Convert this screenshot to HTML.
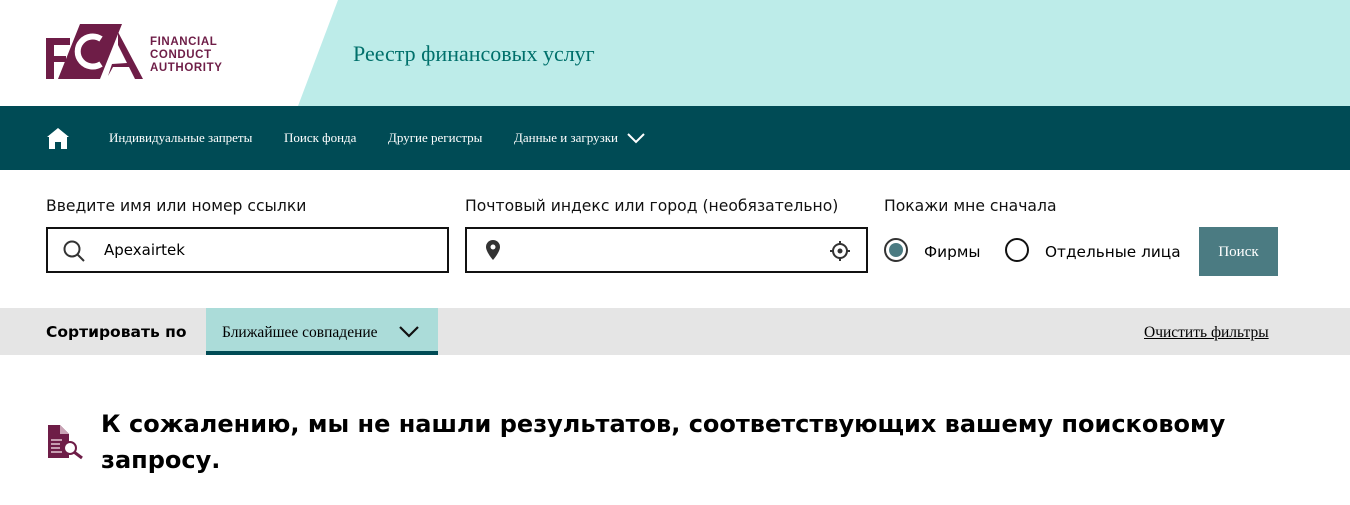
<!DOCTYPE html>
<html><head><meta charset="utf-8"><style>
*{margin:0;padding:0;box-sizing:border-box}
body{width:1350px;height:505px;background:#fff;font-family:"DejaVu Sans","Liberation Sans",sans-serif;position:relative;overflow:hidden}
.hdr{position:absolute;left:0;top:0;width:1350px;height:106px}
.nav{position:absolute;top:106px;left:0;width:1350px;height:64px;background:#004b55;color:#fff;font-family:"Liberation Serif",serif;font-size:13px}
.nav span{position:absolute;top:24px}
.lbl{position:absolute;top:197px;font-size:15.6px;color:#111}
.box{position:absolute;top:227px;height:46px;border:2px solid #111;width:403px}
.sort{position:absolute;top:308px;left:0;width:1350px;height:47px;background:#e5e5e5}
</style></head><body>
<svg class="hdr" width="1350" height="106">
<polygon points="338,0 1350,0 1350,106 298,106" fill="#bdece9"/>
<polygon points="46,38 46,79 54,79 54,62 66,62 66,56 54,56 54,45 70,45 70,38" fill="#6e1d47"/>
<polygon points="80,24 122,24 100,79 58,79" fill="#6e1d47"/>
<path d="M101,39 A15,15 0 1 0 101,64" fill="none" stroke="#fff" stroke-width="6"/>
<polygon points="118,32 143,79 135,79 129,67 113,67 108,76 112,64 127,63 118,45" fill="#6e1d47"/>
<text x="150" y="45" font-family="Liberation Sans" font-size="11.5" fill="#6e1d47" font-weight="bold" letter-spacing="0.6">FINANCIAL</text>
<text x="150" y="58" font-family="Liberation Sans" font-size="11.5" fill="#6e1d47" font-weight="bold" letter-spacing="0.6">CONDUCT</text>
<text x="150" y="71" font-family="Liberation Sans" font-size="11.5" fill="#6e1d47" font-weight="bold" letter-spacing="0.6">AUTHORITY</text>
<text x="353" y="61" font-family="Liberation Serif" font-size="22" fill="#00706b">Реестр финансовых услуг</text>
</svg>
<div class="nav">
<svg style="position:absolute;left:47px;top:21px" width="22" height="22"><path d="M11,1 L22,10 L20,10 L20,22 L14,22 L14,15 L8,15 L8,22 L2,22 L2,10 L0,10Z" fill="#fff"/></svg>
<span style="left:109px">Индивидуальные запреты</span>
<span style="left:284px">Поиск фонда</span>
<span style="left:388px">Другие регистры</span>
<span style="left:514px">Данные и загрузки</span>
<svg style="position:absolute;left:626px;top:26px" width="20" height="14"><path d="M2,2 L10,10 L18,2" fill="none" stroke="#fff" stroke-width="2"/></svg>
</div>
<div class="lbl" style="left:46px">Введите имя или номер ссылки</div>
<div class="lbl" style="left:465px">Почтовый индекс или город (необязательно)</div>
<div class="lbl" style="left:884px">Покажи мне сначала</div>
<div class="box" style="left:46px"><svg style="position:absolute;left:14px;top:10px" width="24" height="24"><circle cx="10" cy="10" r="7.5" fill="none" stroke="#333" stroke-width="2"/><path d="M15.5,15.5 L22,22" stroke="#333" stroke-width="2"/></svg><span style="position:absolute;left:56px;top:12px;font-size:15px">Apexairtek</span></div>
<div class="box" style="left:465px"><svg style="position:absolute;left:18px;top:10px" width="16" height="22"><path d="M8,1 A7,7 0 0 1 15,8 C15,13 8,21 8,21 C8,21 1,13 1,8 A7,7 0 0 1 8,1Z" fill="#333"/><circle cx="8" cy="8" r="2.5" fill="#fff"/></svg><svg style="position:absolute;left:362px;top:11px" width="22" height="22"><circle cx="11" cy="11" r="7" fill="none" stroke="#333" stroke-width="2"/><circle cx="11" cy="11" r="2.5" fill="#333"/><path d="M11,1V5M11,17V21M1,11H5M17,11H21" stroke="#333" stroke-width="2"/></svg></div>
<svg style="position:absolute;left:884px;top:238px" width="26" height="26"><circle cx="12" cy="12" r="11" fill="none" stroke="#333" stroke-width="2"/><circle cx="12" cy="12" r="7" fill="#4b7b82"/></svg>
<span style="position:absolute;left:924px;top:243px;font-size:15.3px">Фирмы</span>
<svg style="position:absolute;left:1005px;top:238px" width="26" height="26"><circle cx="12" cy="12" r="11" fill="none" stroke="#111" stroke-width="2"/></svg>
<span style="position:absolute;left:1045px;top:243px;font-size:15.3px">Отдельные лица</span>
<div style="position:absolute;left:1199px;top:227px;width:79px;height:49px;background:#4b7b82;color:#fff;font-family:'Liberation Serif',serif;font-size:15px;text-align:center;line-height:51px">Поиск</div>
<div class="sort">
<span style="position:absolute;left:46px;top:15px;font-weight:bold;font-size:15.5px">Сортировать по</span>
<div style="position:absolute;left:206px;top:0;width:232px;height:47px;background:#abdcd9;border-bottom:4px solid #004b55"><span style="position:absolute;left:16px;top:16px;font-family:'Liberation Serif',serif;font-size:15.5px">Ближайшее совпадение</span><svg style="position:absolute;left:192px;top:17px" width="22" height="14"><path d="M2,2 L11,11 L20,2" fill="none" stroke="#111" stroke-width="2.2"/></svg></div>
<span style="position:absolute;left:1144px;top:16px;font-family:'Liberation Serif',serif;font-size:15.5px;text-decoration:underline">Очистить фильтры</span>
</div>
<svg style="position:absolute;left:46px;top:424px" width="40" height="36"><path d="M2,1 H14 L23,10 V34 H2Z" fill="#6e1d47"/><path d="M14,1 V10 H23" fill="#c9a3b5"/><path d="M5,16H16M5,20H14M5,24H14M5,28H16" stroke="#e3c8d4" stroke-width="1.5"/><circle cx="24" cy="24" r="6" fill="#fff" stroke="#6e1d47" stroke-width="2"/><path d="M28,28 L36,34" stroke="#6e1d47" stroke-width="3"/></svg>
<div style="position:absolute;left:101px;top:406px;font-weight:bold;font-size:24px;line-height:36px;width:1200px">К сожалению, мы не нашли результатов, соответствующих вашему поисковому запросу.</div>
</body></html>
